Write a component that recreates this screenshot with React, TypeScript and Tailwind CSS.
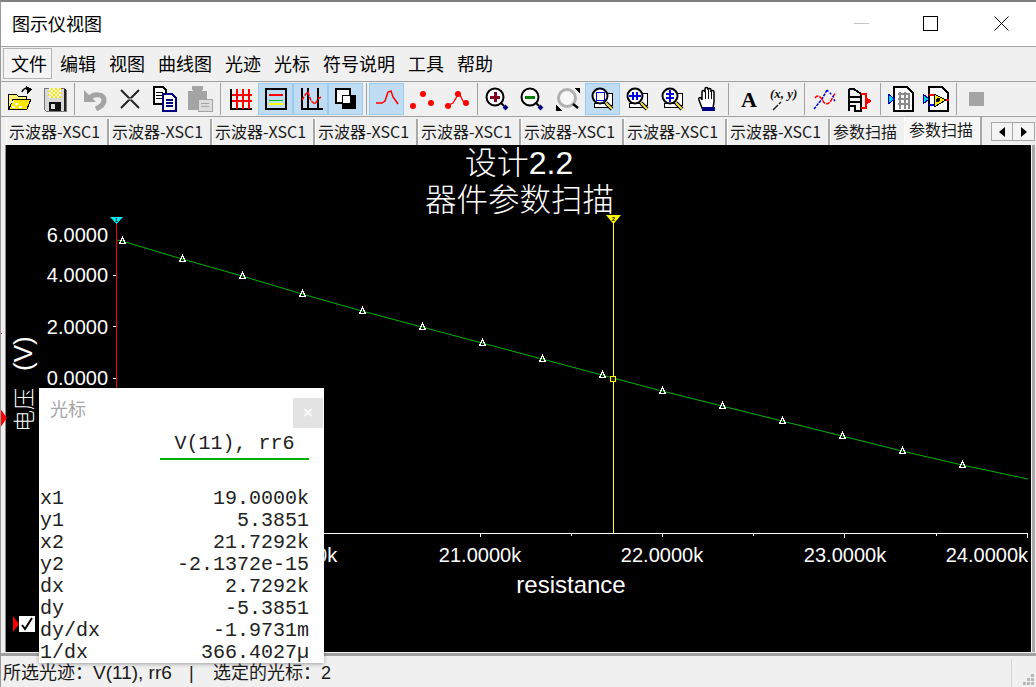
import type { ReactNode } from 'react';

const cjk = "font-['Noto_Sans_CJK_SC','Liberation_Sans',sans-serif]";
const menus = ['编辑', '视图', '曲线图', '光迹', '光标', '符号说明', '工具', '帮助'];
const scopeTabs = Array.from({ length: 8 }, () => '示波器-XSC1');

const sans = "'Liberation Sans','Noto Sans CJK SC',sans-serif";

// plot data, page pixels
const points: [number, number][] = [
  [122, 241], [182, 259], [242, 276], [302, 294], [362, 311], [422, 327], [482, 343], [542, 359],
  [602, 375], [662, 391], [722, 406], [782, 421], [842, 436], [902, 451], [962, 465],
];
const yLabels: [string, number][] = [['6.0000', 242], ['4.0000', 282], ['2.0000', 334], ['0.0000', 385]];
const xLabels: [string, number][] = [['20.0000k', 296], ['21.0000k', 480], ['22.0000k', 662], ['23.0000k', 845]];
const cursorRows = [
  ['x1', '19.0000k'],
  ['y1', '5.3851'],
  ['x2', '21.7292k'],
  ['y2', '-2.1372e-15'],
  ['dx', '2.7292k'],
  ['dy', '-5.3851'],
  ['dy/dx', '-1.9731m'],
  ['1/dx', '366.4027µ'],
];

function Icon({ children, w = 26 }: { children: ReactNode; w?: number }) {
  return (
    <svg width={w} height={26} viewBox={`0 0 ${w} 26`} className="block" shapeRendering="crispEdges">
      {children}
    </svg>
  );
}

function ToolButton({ active, children }: { active?: boolean; children: ReactNode }) {
  return (
    <div
      className={`w-[35px] h-[32px] flex items-center justify-center border ${
        active ? 'bg-[#bfdcf3] border-[#99ccf3]' : 'border-transparent'
      }`}
    >
      {children}
    </div>
  );
}

function Sep({ w = 'w-[6px]' }: { w?: string }) {
  return (
    <div className={`${w} h-[32px] flex justify-center`}>
      <div className="w-px h-full bg-[#a0a0a0]" />
    </div>
  );
}

// magnifier with a pencil, used by the three box zoom buttons
function ZoomBox({ children }: { children: ReactNode }) {
  return (
    <Icon>
      <rect x="13" y="7" width="9" height="12" fill="#fff" stroke="#000" />
      <rect x="4" y="17" width="14" height="4" fill="#fff" stroke="#000" />
      <circle cx="10" cy="10" r="7.5" fill="#fff" stroke="#000" strokeWidth="2" shapeRendering="auto" />
      {children}
      <path d="M16 17l6 6" stroke="#000" strokeWidth="4" shapeRendering="auto" />
      <path d="M16 17l6 6" stroke="#f4e04a" strokeWidth="2" shapeRendering="auto" />
    </Icon>
  );
}

function Magnifier({ children }: { children: ReactNode }) {
  return (
    <Icon>
      <circle cx="10" cy="11" r="8.5" fill="#fff" stroke="#000" strokeWidth="2" shapeRendering="auto" />
      {children}
      <path d="M16 17l3 3" stroke="#000" strokeWidth="2" shapeRendering="auto" />
      <path d="M19 20l3 3" stroke="#000080" strokeWidth="4" shapeRendering="auto" />
    </Icon>
  );
}

function Toolbar() {
  return (
    <div className="flex items-center shrink-0 h-[35px] pl-px border-b border-[#a0a0a0]">
      <ToolButton>
        <Icon>
          <path d="M1 8h8l2 2h8v3H6l-3 9H1z" fill="#fff27a" stroke="#000" />
          <path d="M6 13h18l-4 10H2z" fill="#ffe500" stroke="#000" />
          <path d="M4 15h3v2H4zM8 17h3v2H8zM5 20h3v2H5zM12 20h3v2h-3z" fill="#fff" />
          <path d="M15 6c1-3 3-4 6-4" stroke="#000" strokeWidth="1.5" fill="none" shapeRendering="auto" />
          <path d="M19 0l6 3-5 5z" fill="#000" />
        </Icon>
      </ToolButton>
      <ToolButton>
        <Icon>
          <path d="M2 2h20l2 2v21H4l-2-2z" fill="#d8d8d8" stroke="#777" />
          <rect x="7" y="2" width="12" height="10" fill="#ffe900" />
          <path d="M7 2h2v2H7zM11 2h2v2h-2zM15 2h2v2h-2zM9 4h2v2H9zM13 4h2v2h-2zM17 4h2v2h-2zM7 6h2v2H7zM11 6h2v2h-2zM15 6h2v2h-2zM9 8h2v2H9zM13 8h2v2h-2zM17 8h2v2h-2zM7 10h2v2H7zM11 10h2v2h-2zM15 10h2v2h-2z" fill="#fff" />
          <rect x="7" y="16" width="12" height="9" fill="#111" />
          <rect x="9" y="18" width="4" height="5" fill="#e0e0e0" />
          <rect x="22" y="3" width="2" height="22" fill="#222" />
        </Icon>
      </ToolButton>
      <Sep w="w-[5px]" />
      <ToolButton>
        <Icon>
          <path d="M8 12C12 7 22 8 22 14C22 19 18 21 14 23" fill="none" stroke="#a4a4a4" strokeWidth="5" shapeRendering="auto" />
          <path d="M2 4v12h12z" fill="#a4a4a4" shapeRendering="auto" />
        </Icon>
      </ToolButton>
      <ToolButton>
        <Icon>
          <path d="M4 4l18 18M22 4L4 22" stroke="#222" strokeWidth="2" shapeRendering="auto" />
          <path d="M11 13h4" stroke="#888" strokeWidth="2" />
        </Icon>
      </ToolButton>
      <ToolButton>
        <Icon>
          <path d="M2 1h9l3 3v14H2z" fill="#fff" stroke="#000" strokeWidth="1.5" />
          <path d="M4 6h7M4 9h7M4 12h7" stroke="#000" />
          <path d="M11 8h9l4 4v13H11z" fill="#fff" stroke="#000080" strokeWidth="2" />
          <path d="M14 14h7M14 17h7M14 20h7" stroke="#000080" strokeWidth="1.5" />
        </Icon>
      </ToolButton>
      <ToolButton>
        <Icon>
          <path d="M1 5h5V2h9v3h5v19H1z" fill="#a4a4a4" />
          <rect x="5" y="0" width="11" height="4" fill="#a4a4a4" />
          <rect x="11" y="13" width="14" height="12" fill="#dcdcdc" stroke="#a4a4a4" />
          <path d="M14 17h8M14 20h8" stroke="#a4a4a4" />
        </Icon>
      </ToolButton>
      <Sep />
      <ToolButton>
        <Icon w={24}>
          <path d="M2 3v20h21" stroke="#000" strokeWidth="1.5" fill="none" />
          <path d="M8 3v20M14 3v20M20 3v20M3 9h20M3 15h20" stroke="#f00" strokeWidth="1.5" />
        </Icon>
      </ToolButton>
      <ToolButton active>
        <Icon w={22}>
          <rect x="1" y="3" width="20" height="20" fill="#bfdcf3" stroke="#000" strokeWidth="2" />
          <path d="M4 9h14" stroke="#f00" strokeWidth="2" />
          <path d="M4 14h14" stroke="#00c000" />
          <path d="M4 18h14" stroke="#ff0" strokeWidth="2" />
        </Icon>
      </ToolButton>
      <ToolButton active>
        <Icon w={24}>
          <path d="M3 2v21M9 2v21M19 2v21M2 23h22" stroke="#000" strokeWidth="2" fill="none" />
          <path d="M3 14l3-5 3-3 3 9 4 3 4-6 3-1" stroke="#f00" strokeWidth="1.5" fill="none" strokeDasharray="4 1" shapeRendering="auto" />
        </Icon>
      </ToolButton>
      <ToolButton active>
        <Icon w={22}>
          <rect x="1" y="3" width="14" height="14" fill="#fff" stroke="#000" strokeWidth="1.5" />
          <rect x="7" y="9" width="14" height="14" fill="#000" />
          <rect x="7" y="9" width="8" height="8" fill="#fff" stroke="#000" />
        </Icon>
      </ToolButton>
      <Sep />
      <ToolButton active>
        <Icon w={24}>
          <path d="M1 17h6l3-2 3-9 3-1 2 6 3 4 2 3" stroke="#f00" strokeWidth="1.5" fill="none" shapeRendering="auto" />
        </Icon>
      </ToolButton>
      <ToolButton>
        <Icon w={24}>
          <g fill="#f00" shapeRendering="auto">
            <circle cx="3" cy="20" r="3" />
            <circle cx="13" cy="8" r="3" />
            <circle cx="21" cy="17" r="3" />
          </g>
        </Icon>
      </ToolButton>
      <ToolButton>
        <Icon w={24}>
          <path d="M2 20l6-3 6-10 5 10 3 2" stroke="#f00" strokeWidth="1.3" fill="none" shapeRendering="auto" />
          <g fill="#f00" shapeRendering="auto">
            <circle cx="3" cy="20" r="3" />
            <circle cx="13" cy="8" r="3" />
            <circle cx="21" cy="17" r="3" />
          </g>
        </Icon>
      </ToolButton>
      <Sep />
      <ToolButton>
        <Magnifier>
          <path d="M5 11h10M10 6v10" stroke="#800020" strokeWidth="3" />
        </Magnifier>
      </ToolButton>
      <ToolButton>
        <Magnifier>
          <path d="M5 11h10" stroke="#008000" strokeWidth="3" />
        </Magnifier>
      </ToolButton>
      <ToolButton>
        <Icon>
          <circle cx="12" cy="12" r="8.5" fill="#f8f8f8" stroke="#b0b0b0" strokeWidth="3" shapeRendering="auto" />
          <path d="M18 18l5 4" stroke="#000" strokeWidth="2.5" shapeRendering="auto" />
          <path d="M19 2h6v6l-2-2-2-2zM1 19l2 2 2 2 2 2H1z" fill="#000" />
        </Icon>
      </ToolButton>
      <ToolButton active>
        <ZoomBox>
          <rect x="6" y="6" width="8" height="8" fill="none" stroke="#0000e0" />
        </ZoomBox>
      </ToolButton>
      <ToolButton>
        <ZoomBox>
          <path d="M8 6v8M12 6v8M4 10h12" stroke="#0000e0" strokeWidth="2" />
        </ZoomBox>
      </ToolButton>
      <ToolButton>
        <ZoomBox>
          <path d="M6 8h8M6 12h8M10 4v12" stroke="#0000e0" strokeWidth="2" />
        </ZoomBox>
      </ToolButton>
      <ToolButton>
        <Icon w={22}>
          <path
            d="M5 22l-3-8c-1-2 1-3 2-2l1 2V6c0-2 2-2 3 0V3c0-2 3-2 3 0v1c0-2 3-2 3 0v2c0-2 3-2 3 0v10l-1 6z"
            fill="#fff"
            stroke="#000"
            strokeWidth="1.5"
            shapeRendering="auto"
          />
          <path d="M8 6v7M11 4v9M14 5v8" stroke="#000" />
          <rect x="5" y="21" width="13" height="4" fill="#000080" />
        </Icon>
      </ToolButton>
      <Sep />
      <ToolButton>
        <Icon>
          <text x="13" y="21" textAnchor="middle" fontFamily="'Liberation Serif',serif" fontWeight="700" fontSize="22" fill="#000">
            A
          </text>
        </Icon>
      </ToolButton>
      <ToolButton>
        <Icon w={28}>
          <text x="0" y="12" fontFamily="'Liberation Serif',serif" fontStyle="italic" fontWeight="700" fontSize="13" fill="#111">
            {'(x, y)'}
          </text>
          <path d="M3 24l5-5M9 18l2-2" stroke="#222" strokeWidth="1.5" shapeRendering="auto" />
        </Icon>
      </ToolButton>
      <Sep />
      <ToolButton>
        <Icon>
          <path d="M2 23l8-10 5-9" stroke="#0000e0" strokeWidth="1.5" fill="none" strokeDasharray="3 1" shapeRendering="auto" />
          <path d="M3 12c3-4 6-1 8 3s5 3 7 1 3-7 6-9" stroke="#f00" strokeWidth="1.5" fill="none" strokeDasharray="4 1" shapeRendering="auto" />
          <path d="M15 4l6 6 2 6" stroke="#0000e0" strokeWidth="1.5" fill="none" strokeDasharray="2 2" shapeRendering="auto" />
        </Icon>
      </ToolButton>
      <ToolButton>
        <Icon>
          <path d="M2 3v22M2 3h5l7 5v17h-6V20H2M2 11h11M2 16h11" stroke="#000" strokeWidth="2" fill="none" />
          <path d="M14 8h5v14h-5" stroke="#f00" strokeWidth="2" fill="none" />
          <path d="M19 11l6 4-6 4z" fill="#f00" />
        </Icon>
      </ToolButton>
      <Sep />
      <ToolButton>
        <Icon>
          <path d="M6 1h13l6 6v18H6z" fill="#fff" stroke="#000" strokeWidth="2" />
          <path d="M10 8h12M10 13h12M10 18h12M12 6v17M17 6v17M21 8v15" stroke="#8a8a8a" strokeWidth="1.5" />
          <path d="M0 8l7 5-7 5z" fill="#00d0e0" stroke="#0000c0" />
        </Icon>
      </ToolButton>
      <ToolButton>
        <Icon>
          <path d="M6 1h13l6 6v18H6z" fill="#fff" stroke="#000" strokeWidth="2" />
          <path d="M11 8l12 6-12 7z" fill="#ffe900" stroke="#000" />
          <circle cx="15" cy="14" r="2" fill="#000" />
          <path d="M6 9h5" stroke="#f00" strokeWidth="1.5" />
          <path d="M6 19h5" stroke="#0000e0" strokeWidth="1.5" />
          <path d="M23 14h3" stroke="#f00" strokeWidth="2" />
          <path d="M0 8l6 5-6 5z" fill="#00d0e0" stroke="#0000c0" />
        </Icon>
      </ToolButton>
      <Sep />
      <ToolButton>
        <div className="w-[15px] h-[14px] bg-[#a4a4a4]" />
      </ToolButton>
    </div>
  );
}

function Tabs() {
  return (
    <div className={`flex items-stretch shrink-0 h-[28px] pl-[5px] pr-[2px] text-[16px] text-[#1a1a1a] ${cjk}`}>
      {scopeTabs.map((label, i) => (
        <div
          key={i}
          className="w-[103px] shrink-0 mt-[2px] border-r-2 border-r-[#a8a8a8] border-l border-l-white pl-[2px] leading-[25px] whitespace-nowrap"
        >
          {label}
        </div>
      ))}
      <div className="w-[74px] shrink-0 mt-[2px] border-l border-l-white pl-[2px] leading-[25px]">参数扫描</div>
      <div className="w-[78px] shrink-0 bg-[#f7f7f7] border-r-2 border-r-[#a8a8a8] border-l border-l-white pl-[4px] leading-[24px]">
        参数扫描
      </div>
      <div className="ml-[9px] mt-[5px] h-[19px] flex border border-[#a8a8a8] bg-[#f4f4f4]">
        <div className="w-[21px] flex items-center justify-center border-r border-[#a8a8a8]">
          <div className="w-0 h-0 border-y-[5px] border-y-transparent border-r-[6px] border-r-black" />
        </div>
        <div className="w-[21px] flex items-center justify-center">
          <div className="w-0 h-0 border-y-[5px] border-y-transparent border-l-[6px] border-l-black" />
        </div>
      </div>
    </div>
  );
}

function Plot() {
  return (
    <svg viewBox="6 145 1025 507" className="block w-[1025px] h-[507px]" fontFamily={sans} fill="#fff">
      <text x="519" y="174" textAnchor="middle" fontSize="32" fontWeight="300">设计2.2</text>
      <text x="519.500" y="211" textAnchor="middle" fontSize="31.500" fontWeight="300">器件参数扫描</text>

      {yLabels.map(([t, y]) => (
        <text key={t} x="108" y={y} textAnchor="end" fontSize="20">{t}</text>
      ))}
      <path d="M113 275.500h4M113 326.500h4M113 378.500h4" stroke="#fff" shapeRendering="crispEdges" />
      <text x="32" y="432" fontSize="22" transform="rotate(-90 32 432)" fontWeight="300">
        <tspan fontFamily="'Noto Sans CJK SC',sans-serif">电压</tspan>
        <tspan dx="17" fontSize="26" fontFamily="'Liberation Sans',sans-serif">(V)</tspan>
      </text>

      <path d="M117 533.500H1028" stroke="#fff" shapeRendering="crispEdges" />
      <path d="M298.500 534v3M480.500 534v3M662.500 534v3M844.500 534v4M1027.500 534v4M936.500 534v2M753.500 534v2M571.500 534v2" stroke="#fff" shapeRendering="crispEdges" />
      {xLabels.map(([t, x]) => (
        <text key={t} x={x} y="562" textAnchor="middle" fontSize="20">{t}</text>
      ))}
      <text x="1028" y="562" textAnchor="end" fontSize="20">24.0000k</text>
      <text x="571" y="593" textAnchor="middle" fontSize="24">resistance</text>

      <polyline
        points={`117,240 ${points.map((p) => p.join(',')).join(' ')} 1028,479`}
        fill="none"
        stroke="#00b400"
      />
      {points.map(([x, y]) => (
        <path key={x} d={`M${x + 0.5} ${y - 3.5}l3 6h-6z`} fill="none" stroke="#fff" shapeRendering="crispEdges" />
      ))}

      {/* cursors */}
      <path d="M116.500 223V652" stroke="#f00" shapeRendering="crispEdges" />
      <path d="M110 217h13l-6.500 7z" fill="#00f0f0" />
      <text x="116.500" y="222" textAnchor="middle" fontSize="6" fill="#000">1</text>
      <path d="M613.500 222V533" stroke="#ffff30" shapeRendering="crispEdges" />
      <path d="M606 215h15l-7.500 9z" fill="#ffff00" />
      <text x="613.500" y="221" textAnchor="middle" fontSize="6" fontWeight="700" fill="#000">2</text>
      <rect x="610.500" y="376.500" width="5" height="5" fill="#202000" stroke="#ffff00" shapeRendering="crispEdges" />
    </svg>
  );
}

function CursorPanel() {
  return (
    <div className="absolute left-[38px] top-[386px] w-[285px] h-[275px] bg-white shadow-[0_1px_4px_rgba(0,0,0,0.35)]">
      <div className={`absolute left-[11px] top-[7px] text-[18px] leading-[26px] text-[#a6a6a6] ${cjk}`}>光标</div>
      <div className="absolute right-px top-[10px] w-[30px] h-[30px] bg-[#e3e3e3] flex items-center justify-center text-[17px] font-bold text-[#fbfbfb] font-['Liberation_Sans',sans-serif]">
        ×
      </div>
      <div className="pl-[121px] pr-[15px] pt-[44px] font-['Liberation_Mono',monospace] text-[20px] text-[#222]">
        <div className="leading-[24px] border-b-2 border-[#00b000] h-[28px] text-center whitespace-nowrap">V(11), rr6</div>
      </div>
      <div className="mt-[28px] pl-px pr-[15px] font-['Liberation_Mono',monospace] text-[20px] text-[#222]">
        {cursorRows.map(([k, v]) => (
          <div key={k} className="flex justify-between h-[22px] leading-[22px] whitespace-nowrap">
            <span>{k}</span>
            <span>{v}</span>
          </div>
        ))}
      </div>
      {/* trace visibility checkbox sits left of the panel */}
      <div className="absolute left-[-26px] top-[228px] flex items-center">
        <div className="w-0 h-0 border-y-[8px] border-y-transparent border-l-[6px] border-l-[#f00]" />
        <div className="w-[16px] h-[16px] bg-white flex items-center justify-center">
          <svg width="14" height="14" viewBox="0 0 14 14">
            <path d="M2 8l3 4 7-11" fill="none" stroke="#000" strokeWidth="2" />
          </svg>
        </div>
      </div>
    </div>
  );
}

export default function App() {
  return (
    <div className={`relative w-[1036px] h-[687px] overflow-hidden bg-[#f0f0f0] flex flex-col border-t-2 border-l border-t-[#7f7f7f] border-l-[#9a9a9a] ${cjk}`}>
      {/* title bar */}
      <div className="h-[45px] shrink-0 bg-white border-b border-[#a0a0a0] flex items-center pl-[11px] pb-[2px] text-[18px] text-black">
        <span className="flex-1">图示仪视图</span>
        <div className="w-[70px] flex justify-center">
          <div className="w-[15px] h-px bg-[#c4c4c4]" />
        </div>
        <div className="w-[70px] pr-px flex justify-center">
          <div className="w-[15px] h-[15px] border border-black" />
        </div>
        <div className="w-[70px] flex justify-center">
          <svg width="15" height="15" viewBox="0 0 15 15">
            <path d="M0.500 0.500l14 14M14.500 0.500l-14 14" stroke="#000" strokeWidth="1" />
          </svg>
        </div>
      </div>
      {/* menu bar */}
      <div className="h-[35px] shrink-0 border-b border-[#a0a0a0] flex items-center pl-[2px] pb-px text-[18px] text-black">
        <div className="h-[31px] w-[49px] border border-[#b4b4b4] bg-[#f4f4f4] pl-[7px] leading-[28px] mr-[1.500px]">文件</div>
        {menus.map((m) => (
          <div key={m} className="px-[6.500px] whitespace-nowrap">{m}</div>
        ))}
      </div>
      <Toolbar />
      <Tabs />
      <div className="flex shrink-0 pl-[4px]">
        <div className="bg-black w-[1026px] h-[507px] border-l border-[#8a8a8a]">
          <Plot />
        </div>
        <div className="ml-px w-[3px] bg-[#a8a8a8]" />
      </div>
      {/* status bar */}
      <div className="mt-[1px] flex-1 min-h-0 flex items-center border-t-[3px] border-[#a0a0a0] bg-[#f0f0f0] pl-[2px] pt-[2px] text-[18px] leading-[24px] text-[#1a1a1a] font-['Liberation_Sans','Noto_Sans_CJK_SC',sans-serif] whitespace-nowrap">
        <span className="w-[171px]">所选光迹：<span className="text-[19px]">V(11), rr6</span></span>
        <span className="w-[38px] pl-[15px]">|</span>
        <span className="ml-px">选定的光标：2</span>
        <div className="ml-auto w-px h-[28px] bg-[#d4d4d4]" />
        <svg width="12" height="12" viewBox="0 0 12 12" className="ml-[11px] mr-px self-end mb-[1px]" shapeRendering="crispEdges">
          <path d="M8 0h3v3H8zM4 4h3v3H4zM8 4h3v3H8zM0 8h3v3H0zM4 8h3v3H4zM8 8h3v3H8z" fill="#b8b8b8" />
        </svg>
      </div>
      <CursorPanel />
      {/* marker for the selected trace, on the window's left edge */}
      <div className="absolute left-[-1px] top-[406px] w-0 h-0 border-y-[10px] border-y-transparent border-l-[7px] border-l-[#f00]" />
      <div className="absolute left-[-1px] top-[331px] w-[2px] h-px bg-[#c04040]" />
    </div>
  );
}
